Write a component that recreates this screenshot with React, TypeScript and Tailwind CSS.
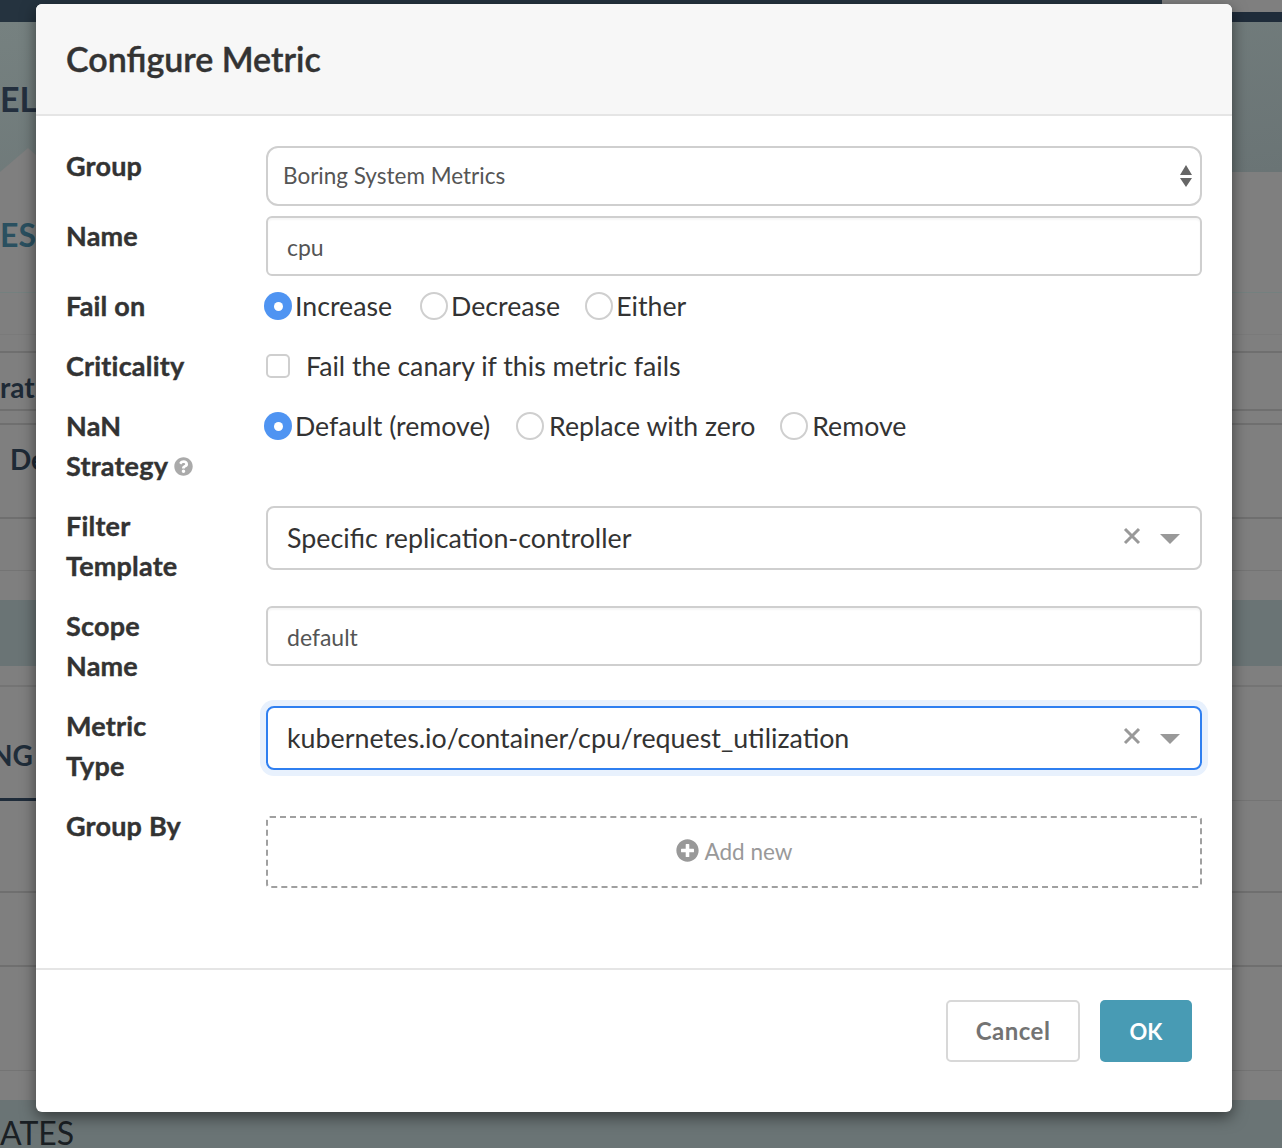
import { ReactNode } from "react";
import { FaPlusCircle, FaQuestionCircle } from "react-icons/fa";

const font = { fontFamily: "Lato, 'Noto Sans', sans-serif" };

function Radio({ checked, label, gap, className }: { checked?: boolean; label: string; gap: string; className?: string }) {
  return (
    <label className={`flex items-center ${gap} ${className ?? ""}`}>
      {checked ? (
        <span className="flex h-[28px] w-[28px] items-center justify-center rounded-full bg-[#4f94f2]">
          <span className="h-[9px] w-[9px] rounded-full bg-white" />
        </span>
      ) : (
        <span className="h-[28px] w-[28px] rounded-full border-2 border-[#cfcfcf] bg-white" />
      )}
      <span className="text-[26.7px] leading-[40px] text-[#333]">{label}</span>
    </label>
  );
}

function Row({ label, className, children }: { label: ReactNode; className: string; children?: ReactNode }) {
  return (
    <div className={`flex ${className}`}>
      <div className="w-[200px] shrink-0 text-[27px] font-bold leading-[40px] tracking-[0.2px] text-[#333] [-webkit-text-stroke:0.4px_#333]">
        {label}
      </div>
      <div className="min-w-0 flex-1">{children}</div>
    </div>
  );
}

function Clearable({ value, focused }: { value: string; focused?: boolean }) {
  return (
    <div
      className={`flex h-[64px] items-center rounded-[8px] border-2 bg-white pl-[19px] pr-[20px] text-[26.8px] text-[#333] ${
        focused ? "border-[#2f7ff0] shadow-[0_0_0_6px_#e8f1fd]" : "border-[#cfcfcf]"
      }`}
    >
      <span className="flex-1">{value}</span>
      <svg width="18" height="18" viewBox="0 0 18 18" className="mb-[4px] mr-[19px]">
        <path d="M2 2 16 16M16 2 2 16" stroke="#999" strokeWidth="3" fill="none" />
      </svg>
      <svg width="20" height="10" viewBox="0 0 20 10" className="mt-[1px]">
        <path d="M0 0H20L10 10Z" fill="#999" />
      </svg>
    </div>
  );
}

function TextBox({ value }: { value: string }) {
  return (
    <div className="flex h-[60px] items-center rounded-[6px] border-2 border-[#cfcfcf] bg-white pl-[19px] pt-[3px] text-[23px] text-[#555] shadow-[inset_0_2px_2px_rgba(0,0,0,0.04)]">
      {value}
    </div>
  );
}

function Backdrop() {
  return (
    <div className="flex h-[1148px] flex-col overflow-hidden bg-[#7f7f7f] text-[#1e2a36]">
      <div className="flex h-[22px] shrink-0">
        <div className="flex-1 bg-[#25333f]" />
        <div className="w-[120px]">
          <div className="h-[12px] bg-[#7f7f7f]" />
          <div className="h-[10px] bg-[#1f2c3a]" />
        </div>
      </div>
      <div className="relative h-[150px] shrink-0 bg-gradient-to-br from-[#768180] to-[#6a7475] pt-[60px] text-[34px] font-bold leading-[34px] text-[#232f3e]">
        EL
        <svg width="36" height="24" viewBox="0 0 36 24" className="absolute bottom-0 left-0">
          <path d="M0 24 28 0 36 7V24Z" fill="#7f7f7f" />
        </svg>
      </div>
      <div className="h-[121px] shrink-0 border-b border-[#74807f] pt-[46px] text-[32px] font-bold leading-[34px] text-[#2a5060]">ES</div>
      <div className="h-[42px] shrink-0 border-b border-[#7a7a7a]" />
      <div className="h-[18px] shrink-0 border-b-2 border-[#6f6f6f]" />
      <div className="h-[58px] shrink-0 border-b-2 border-[#6f6f6f] pt-[20px] text-[28px] font-bold leading-[28px]">rat</div>
      <div className="h-[14px] shrink-0 border-b-2 border-[#6f6f6f]" />
      <div className="h-[94px] shrink-0 border-b-2 border-[#6f6f6f] pl-[10px] pt-[20px] text-[28px] font-bold leading-[28px]">De</div>
      <div className="h-[52px] shrink-0 border-b border-[#747474]" />
      <div className="h-[29px] shrink-0" />
      <div className="h-[66px] shrink-0 bg-[#6a7475]" />
      <div className="h-[21px] shrink-0 border-b-2 border-[#747474]" />
      <div className="h-[114px] shrink-0 border-b border-[#747474]">
        <div className="-ml-[9px] h-[111px] pt-[54px] text-[28px] font-bold leading-[28px] text-[#1f2d3a]">NG :</div>
        <div className="h-[3px] w-[36px] bg-[#1f2c3a]" />
      </div>
      <div className="h-[92px] shrink-0 border-b-2 border-[#6f6f6f]" />
      <div className="h-[74px] shrink-0 border-b-2 border-[#6f6f6f]" />
      <div className="h-[104px] shrink-0 border-b border-[#747474]" />
      <div className="h-[29px] shrink-0" />
      <div className="flex-1 bg-[#6a7475] pt-[16px] text-[32px] leading-[34px] text-[#1a2024]">ATES</div>
    </div>
  );
}

export default function App() {
  return (
    <div className="relative h-[1148px] overflow-hidden" style={font}>
      <Backdrop />
      <div className="absolute left-[36px] top-[4px] flex h-[1108px] w-[1196px] flex-col rounded-[6px] bg-white shadow-[0_5px_15px_rgba(0,0,0,0.5)]">
        <div className="flex h-[112px] shrink-0 items-center rounded-t-[6px] border-b-2 border-[#e5e5e5] bg-[#f7f7f7] px-[30px]">
          <h3 className="pb-[1px] text-[34px] font-semibold text-[#333] [-webkit-text-stroke:0.4px_#333]">Configure Metric</h3>
        </div>
        <div className="flex-1 pl-[30px] pr-[30px] pt-[30px]">
          <Row label="Group" className="mb-[10px]">
            <div className="flex h-[60px] items-center justify-between rounded-[12px] border-2 border-[#cfcfcf] bg-white pl-[15px] pr-[8px] text-[22.5px] text-[#555]">
              <span>Boring System Metrics</span>
              <svg width="12" height="24" viewBox="0 0 12 24">
                <path d="M6 1 12 11H0ZM0 14H12L6 23Z" fill="#666" />
              </svg>
            </div>
          </Row>
          <Row label="Name" className="mb-[10px]">
            <TextBox value="cpu" />
          </Row>
          <Row label="Fail on" className="mb-[20px] h-[40px]">
            <div className="-ml-[2px] flex">
              <Radio checked label="Increase" gap="gap-[3px]" />
              <Radio label="Decrease" gap="gap-[3px]" className="ml-[28px]" />
              <Radio label="Either" gap="gap-[3px]" className="ml-[25px]" />
            </div>
          </Row>
          <Row label="Criticality" className="mb-[20px] h-[40px]">
            <label className="flex h-[40px] items-center">
              <span className="h-[24px] w-[24px] rounded-[5px] border-2 border-[#cfcfcf] bg-white" />
              <span className="ml-[16px] text-[26.7px] text-[#333]">Fail the canary if this metric fails</span>
            </label>
          </Row>
          <Row
            label={
              <>
                NaN
                <br />
                <span className="inline-flex items-center gap-[6px]">
                  Strategy <FaQuestionCircle className="h-[19px] w-[19px] text-[#aaa]" />
                </span>
              </>
            }
            className="mb-[20px] h-[80px]"
          >
            <div className="-ml-[2px] flex">
              <Radio checked label="Default (remove)" gap="gap-[3px]" />
              <Radio label="Replace with zero" gap="gap-[5px]" className="ml-[26px]" />
              <Radio label="Remove" gap="gap-[4px]" className="ml-[25px]" />
            </div>
          </Row>
          <Row
            label={
              <>
                Filter
                <br />
                Template
              </>
            }
            className="mb-[20px] h-[80px]"
          >
            <Clearable value="Specific replication-controller" />
          </Row>
          <Row
            label={
              <>
                Scope
                <br />
                Name
              </>
            }
            className="mb-[20px] h-[80px]"
          >
            <TextBox value="default" />
          </Row>
          <Row
            label={
              <>
                Metric
                <br />
                Type
              </>
            }
            className="mb-[20px] h-[80px]"
          >
            <Clearable value="kubernetes.io/container/cpu/request_utilization" focused />
          </Row>
          <Row label="Group By" className="h-[82px]">
            <div className="mt-[10px] flex h-[72px] items-center justify-center gap-[6px] rounded-[4px] border-2 border-dashed border-[#a0a0a0] text-[22.5px] text-[#999]">
              <FaPlusCircle className="mb-[3px] h-[23px] w-[23px]" />
              Add new
            </div>
          </Row>
        </div>
        <div className="flex h-[144px] shrink-0 justify-end gap-[20px] border-t-2 border-[#e5e5e5] pr-[40px] pt-[30px]">
          <button className="h-[62px] w-[134px] rounded-[5px] border-2 border-[#d8d8d8] bg-white text-[24px] font-bold tracking-[0.5px] text-[#737373]">
            Cancel
          </button>
          <button className="h-[62px] w-[92px] rounded-[5px] bg-[#489bb4] text-[22px] font-bold text-white">OK</button>
        </div>
      </div>
    </div>
  );
}
